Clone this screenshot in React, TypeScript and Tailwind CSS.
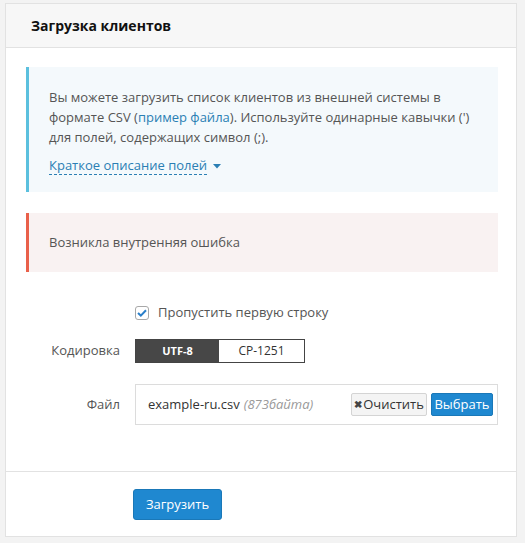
import React from "react";

export default function App() {
  return (
    <div
      className="w-[525px] h-[543px] bg-[#f3f3f3] pt-[3px] pl-[5px] overflow-hidden"
      style={{ fontFamily: '"Open Sans", "Noto Sans", sans-serif' }}
    >
      <div className="w-[512px] h-[534px] bg-white border border-[#e2e2e2] flex flex-col">
        <div className="h-[44px] bg-[#f7f7f7] border-b border-[#e2e2e2] flex items-center pl-[25px] shrink-0">
          <h1 className="text-[14px] font-bold text-[#111]">Загрузка клиентов</h1>
        </div>
        <div className="h-[423px] pl-5 pr-[18px] pt-[19px] shrink-0">
          <div className="bg-[#f4f9fc] border-l-[3px] border-[#5bc0de] h-[125px] pl-5 pr-4 pt-5 text-[13px] leading-[20px] text-[#555]">
            <p>
              Вы можете загрузить список клиентов из внешней системы в формате CSV (
              <span className="text-[#2a7fb4]">пример файла</span>). Используйте одинарные
              кавычки (') для полей, содержащих символ (;).
            </p>
            <div className="mt-[9px] flex items-center text-[#2a7fb4]">
              <span className="border-b border-dashed border-[#2a7fb4] leading-[18px]">
                Краткое описание полей
              </span>
              <svg width="8" height="5" viewBox="0 0 8 5" className="ml-[6px] mt-[1px]">
                <path d="M0 0 L8 0 L4 4.5 Z" fill="#2a7fb4" />
              </svg>
            </div>
          </div>
          <div className="mt-[21px] bg-[#f9f2f2] border-l-[3px] border-[#e9604a] h-[59px] pl-5 flex items-center text-[13px] text-[#555]">
            Возникла внутренняя ошибка
          </div>
          <div className="mt-[34px] flex items-center h-[14px] pl-[109px]">
            <div className="w-[14px] h-[14px] rounded-[3px] border border-[#a8a8a8] bg-white flex items-center justify-center">
              <svg width="10" height="8" viewBox="0 0 10 8">
                <path d="M1 4 L3.8 6.6 L9 1.2" fill="none" stroke="#2a7fc9" strokeWidth="2" />
              </svg>
            </div>
            <span className="ml-[9px] text-[13px] text-[#555]">Пропустить первую строку</span>
          </div>
          <div className="mt-[19px] flex items-center">
            <div className="w-[94px] text-right text-[13px] text-[#555]">Кодировка</div>
            <div className="ml-[15px] flex h-[24px] w-[170px] border border-[#444]">
              <div className="w-[83px] bg-[#474747] text-white font-bold text-[11px] flex items-center justify-center">
                UTF-8
              </div>
              <div className="flex-1 bg-white text-[#333] text-[12px] flex items-center justify-center">
                CP-1251
              </div>
            </div>
          </div>
          <div className="mt-[21px] flex items-center">
            <div className="w-[94px] text-right text-[13px] text-[#555]">Файл</div>
            <div className="ml-[15px] w-[363px] h-[41px] border border-[#dcdcdc] flex items-center pl-[12px] pr-[4px]">
              <span className="text-[13px] text-[#333]">example-ru.csv</span>
              <span className="ml-[4px] text-[13px] italic text-[#999]">(873байта)</span>
              <div className="ml-auto flex items-center gap-[4px]">
                <button className="h-[23px] w-[76px] bg-[#f4f4f4] border border-[#d4d4d4] rounded-[2px] text-[13px] text-[#333] flex items-center justify-center">
                  <span className="text-[10px] font-bold text-[#444] mr-[1px]">✖</span>Очистить
                </button>
                <button className="h-[23px] w-[62px] bg-[#1f88d0] border border-[#1a78b8] rounded-[2px] text-[13px] text-white flex items-center justify-center">
                  Выбрать
                </button>
              </div>
            </div>
          </div>
        </div>
        <div className="border-t border-[#e2e2e2] flex-1 pt-[17px] pl-[127px]">
          <button className="w-[89px] h-[31px] bg-[#1f88d0] border border-[#1a78b8] rounded-[3px] text-[13px] text-white">
            Загрузить
          </button>
        </div>
      </div>
    </div>
  );
}
